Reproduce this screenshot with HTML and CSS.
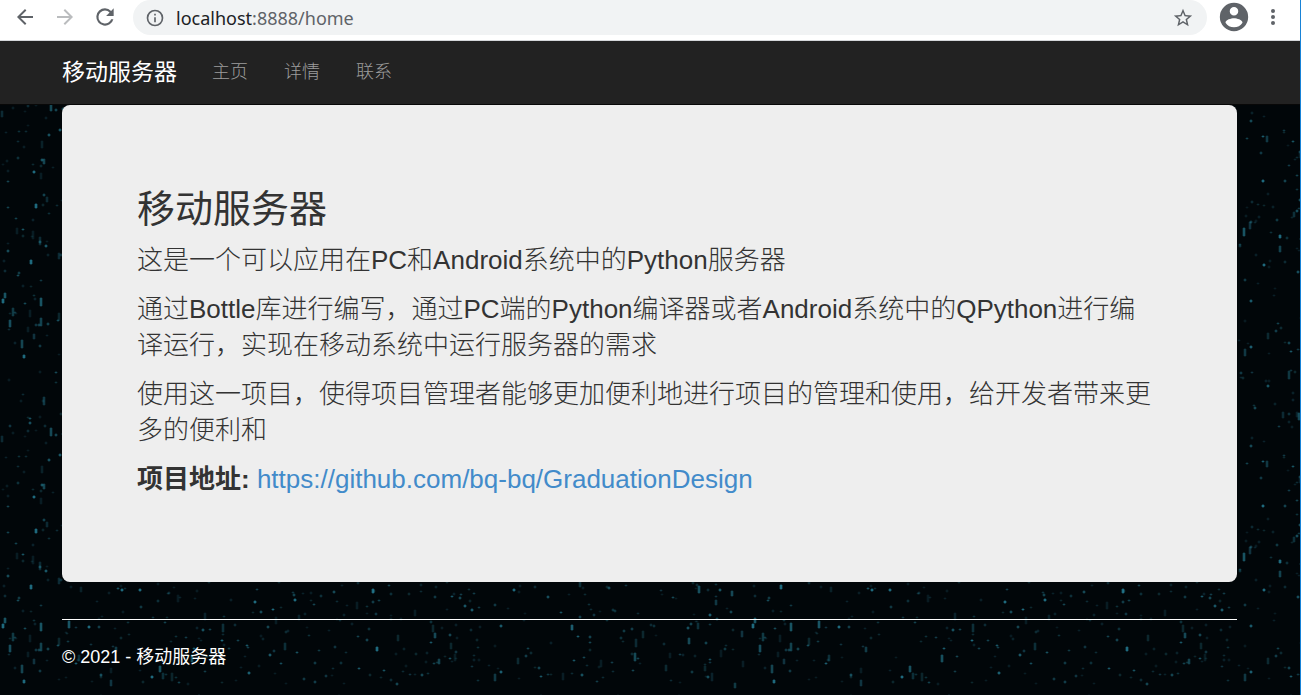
FILE: index.html
```html
<!DOCTYPE html>
<html lang="zh-CN">
<head>
<meta charset="utf-8">
<meta name="viewport" content="width=device-width, initial-scale=1">
<title>移动服务器</title>
<link rel="stylesheet" href="styles.css">
</head>
<body>
<header class="toolbar">
  <button class="tool" type="button" aria-label="Back">
    <svg width="24" height="24" viewBox="0 0 24 24"><path d="M20 11H7.8l5.6-5.6L12 4l-8 8 8 8 1.4-1.4L7.8 13H20z"/></svg>
  </button>
  <button class="tool tool-off" type="button" aria-label="Forward">
    <svg width="24" height="24" viewBox="0 0 24 24"><path d="M12 4l-1.4 1.4 5.6 5.6H4v2h12.200l-5.600 5.600L12 20l8-8z"/></svg>
  </button>
  <button class="tool" type="button" aria-label="Reload">
    <svg width="26" height="26" viewBox="0 0 24 24"><path d="M17.650 6.350A7.960 7.960 0 0 0 12 4a8 8 0 1 0 7.730 10h-2.080A6 6 0 1 1 12 6c1.660 0 3.140.69 4.220 1.780L13 11h7V4z"/></svg>
  </button>
  <div class="address">
    <svg class="info" width="20" height="20" viewBox="0 0 24 24"><path d="M11 17h2v-6h-2zm1-15a10 10 0 1 0 0 20 10 10 0 0 0 0-20zm0 18a8 8 0 1 1 0-16 8 8 0 0 1 0 16zM11 9h2V7h-2z"/></svg>
    <div class="url" role="textbox" aria-label="Address" tabindex="0"><span class="host">localhost</span>:8888/home</div>
    <button class="tool star" type="button" aria-label="Bookmark">
      <svg width="22" height="22" viewBox="0 0 24 24"><path d="M22 9.240l-7.190-.62L12 2 9.190 8.630 2 9.240l5.460 4.730L5.820 21 12 17.270 18.180 21l-1.630-7.030zM12 15.400l-3.760 2.270 1-4.280-3.320-2.880 4.380-.38L12 6.100l1.710 4.040 4.380.38-3.320 2.880 1 4.280z"/></svg>
    </button>
  </div>
  <button class="tool profile" type="button" aria-label="Profile">
    <svg width="34" height="34" viewBox="0 0 24 24"><path d="M12 2a10 10 0 1 0 0 20 10 10 0 0 0 0-20zm0 3a3 3 0 1 1 0 6 3 3 0 0 1 0-6zm0 14.200a7.200 7.200 0 0 1-6-3.220c.03-1.990 4-3.080 6-3.080s5.970 1.090 6 3.080a7.200 7.200 0 0 1-6 3.220z"/></svg>
  </button>
  <button class="tool menu" type="button" aria-label="Menu">
    <svg width="24" height="24" viewBox="0 0 24 24"><circle cx="12" cy="6" r="2"/><circle cx="12" cy="12" r="2"/><circle cx="12" cy="18" r="2"/></svg>
  </button>
</header>
<div class="page">
  <svg class="rain" aria-hidden="true">
    <defs><pattern id="drops" width="750" height="325" patternUnits="userSpaceOnUse"></pattern></defs>
    <rect width="100%" height="100%" fill="url(#drops)"/>
  </svg>
  <nav class="navbar">
    <a class="brand" href="#">移动服务器</a>
    <a class="nav-link" href="#">主页</a>
    <a class="nav-link" href="#">详情</a>
    <a class="nav-link" href="#">联系</a>
  </nav>
  <main class="container">
    <section class="jumbotron">
      <h1>移动服务器</h1>
      <p>这是一个可以应用在PC和Android系统中的Python服务器</p>
      <p>通过Bottle库进行编写，通过PC端的Python编译器或者Android系统中的QPython进行编译运行，实现在移动系统中运行服务器的需求</p>
      <p>使用这一项目，使得项目管理者能够更加便利地进行项目的管理和使用，给开发者带来更多的便利和</p>
      <p><strong>项目地址:</strong> <a href="#">https://github.com/bq-bq/GraduationDesign</a></p>
    </section>
    <hr>
    <footer class="footer">© 2021 - 移动服务器</footer>
  </main>
</div>
<script src="rain.js"></script>
</body>
</html>
```
FILE: styles.css
```css
* { box-sizing: border-box; }
body {
  margin: 0;
  min-height: 100vh;
  display: flex;
  flex-direction: column;
  border-right: 1px solid #1883d7;
  background: #010609;
  font-family: "Liberation Sans", "Noto Sans CJK SC", sans-serif;
  font-size: 18px;
  line-height: 26px;
  color: #333;
}
a { text-decoration: none; }
.toolbar {
  display: flex;
  align-items: flex-start;
  height: 41px;
  padding: 0 15px 0 13px;
  background: #fff;
  border-bottom: 1px solid #d5d7da;
}
.tool {
  display: flex;
  align-items: center;
  justify-content: center;
  width: 24px;
  height: 34px;
  margin-right: 16px;
  padding: 0;
  border: 0;
  background: none;
  fill: #5f6368;
}
.tool svg { flex: none; }
.tool-off { fill: #babcbe; }
.address {
  flex: 1;
  display: flex;
  align-items: center;
  height: 35px;
  padding: 0 12px;
  border-radius: 18px;
  background: #f1f3f4;
}
.info { fill: #5f6368; }
.url {
  flex: 1;
  margin-left: 11px;
  font-family: "Noto Sans", sans-serif;
  font-size: 18px;
  color: #5f6368;
}
.host { color: #202124; }
.star { margin: 0; }
.profile { width: 34px; margin: 0 10px; }
.menu { margin: 0; }
.page {
  position: relative;
  flex: 1;
}
.rain {
  position: absolute;
  inset: 0;
  width: 100%;
  height: 100%;
}
.navbar {
  position: relative;
  display: flex;
  align-items: center;
  height: 64px;
  padding: 0 62px 2px;
  background: #222;
  border-bottom: 1px solid #080808;
}
.brand {
  margin-right: 17px;
  font-size: 23px;
  color: #fff;
}
.nav-link {
  padding: 0 18px;
  font-weight: 300;
  color: #9d9d9d;
}
.container {
  position: relative;
  padding: 0 63px 24px 62px;
}
.jumbotron {
  padding: 83px 80px 85px 75px;
  border-radius: 8px;
  background: #eee;
}
h1 {
  margin: 0 0 12px;
  font-size: 38px;
  font-weight: 400;
  line-height: 42px;
}
.jumbotron p {
  margin: 0 0 13px;
  font-size: 26px;
  font-weight: 300;
  line-height: 36px;
}
.jumbotron p:last-child { margin: 0; }
.jumbotron strong { font-weight: 700; }
.jumbotron a { color: #428bca; }
hr {
  height: 1px;
  margin: 37px 0 24px;
  border: 0;
  background: #fff;
}
.footer { color: #fff; }
```
FILE: rain.js
```js
// Fills the repeating tile with faint falling drops.
const tile = document.getElementById("drops");

function drop(x, y, w, h, opacity) {
  const r = document.createElementNS("http://www.w3.org/2000/svg", "rect");
  r.setAttribute("x", x);
  r.setAttribute("y", y);
  r.setAttribute("width", w);
  r.setAttribute("height", h);
  r.setAttribute("fill", "#2b93ad");
  r.setAttribute("opacity", opacity);
  tile.appendChild(r);
}

// A bright core with a dim halo.
function glow(x, y, h, strength) {
  drop(x - 1, y, 4, h, (strength * 0.3).toFixed(2));
  drop(x, y - 1, 2, h + 2, (strength * 0.3).toFixed(2));
  drop(x, y, 2, h, (strength * 0.6).toFixed(2));
}

let seed = 2021;
function random() {
  seed = (seed * 16807) % 2147483647;
  return seed / 2147483647;
}

for (let i = 0; i < 1150; i++) {
  const x = Math.floor(1 + random() * 745);
  const y = Math.floor(4 + random() * 314);
  const height = random() < 0.12 ? 5 + Math.floor(random() * 4) : 1 + Math.floor(random() * 2);
  glow(x, y, height, 0.12 + random() * random() * 0.6);
}

// Brighter drops: x, y, height.
[[294, 233, 2], [372, 223, 4], [529, 194, 3], [30, 219, 4], [221, 274, 1],
 [272, 243, 1], [183, 208, 2], [139, 223, 2], [121, 223, 2], [33, 130, 2],
 [35, 163, 4], [23, 314, 3], [2, 258, 4], [88, 260, 2], [211, 211, 2],
 [376, 281, 4], [513, 223, 2], [151, 310, 2], [254, 235, 2], [512, 139, 2]]
  .forEach(([x, y, h]) => glow(x, y, h, 0.8));
```
